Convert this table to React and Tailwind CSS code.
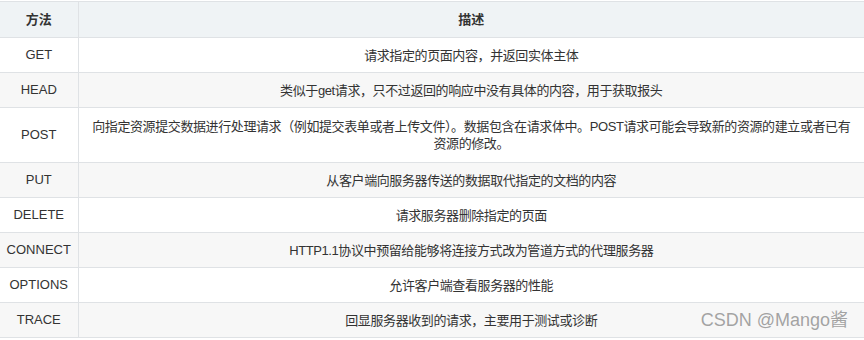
import React from "react";

const rows = [
  { m: "GET", d: "请求指定的页面内容，并返回实体主体" },
  { m: "HEAD", d: "类似于get请求，只不过返回的响应中没有具体的内容，用于获取报头" },
  {
    m: "POST",
    d: "向指定资源提交数据进行处理请求（例如提交表单或者上传文件）。数据包含在请求体中。POST请求可能会导致新的资源的建立或者已有资源的修改。",
    tall: true,
  },
  { m: "PUT", d: "从客户端向服务器传送的数据取代指定的文档的内容" },
  { m: "DELETE", d: "请求服务器删除指定的页面" },
  { m: "CONNECT", d: "HTTP1.1协议中预留给能够将连接方式改为管道方式的代理服务器" },
  { m: "OPTIONS", d: "允许客户端查看服务器的性能" },
  { m: "TRACE", d: "回显服务器收到的请求，主要用于测试或诊断" },
];

export default function App() {
  return (
    <div className="relative w-[864px] h-[340px] bg-white pt-[1px] overflow-hidden font-['Liberation_Sans','Noto_Sans_CJK_SC',sans-serif] text-[13px] text-[#333]">
      <table className="w-[864px] border-collapse table-fixed border-t border-[#dfe2e5]">
        <colgroup>
          <col className="w-[78px]" />
          <col />
        </colgroup>
        <thead>
          <tr className="bg-[#eff3f5] h-[36px]">
            <th className="border-b border-r border-[#dfe2e5] font-bold text-center">方法</th>
            <th className="border-b border-[#dfe2e5] font-bold text-center">描述</th>
          </tr>
        </thead>
        <tbody>
          {rows.map((r, i) => (
            <tr
              key={r.m}
              className={`${i % 2 === 1 ? "bg-[#f7f7f7]" : "bg-white"} ${r.tall ? "h-[55px]" : "h-[35px]"}`}
            >
              <td className="border-b border-r border-[#dfe2e5] text-center">{r.m}</td>
              <td className="border-b border-[#dfe2e5] text-center px-[10px] leading-[17px] tracking-[-0.4px]">{r.d}</td>
            </tr>
          ))}
        </tbody>
      </table>
      <div className="absolute right-[16px] top-[307px] text-[18px] text-[#a3a3a3] [text-shadow:0_0_1px_#fff]">
        CSDN @Mango酱
      </div>
    </div>
  );
}
